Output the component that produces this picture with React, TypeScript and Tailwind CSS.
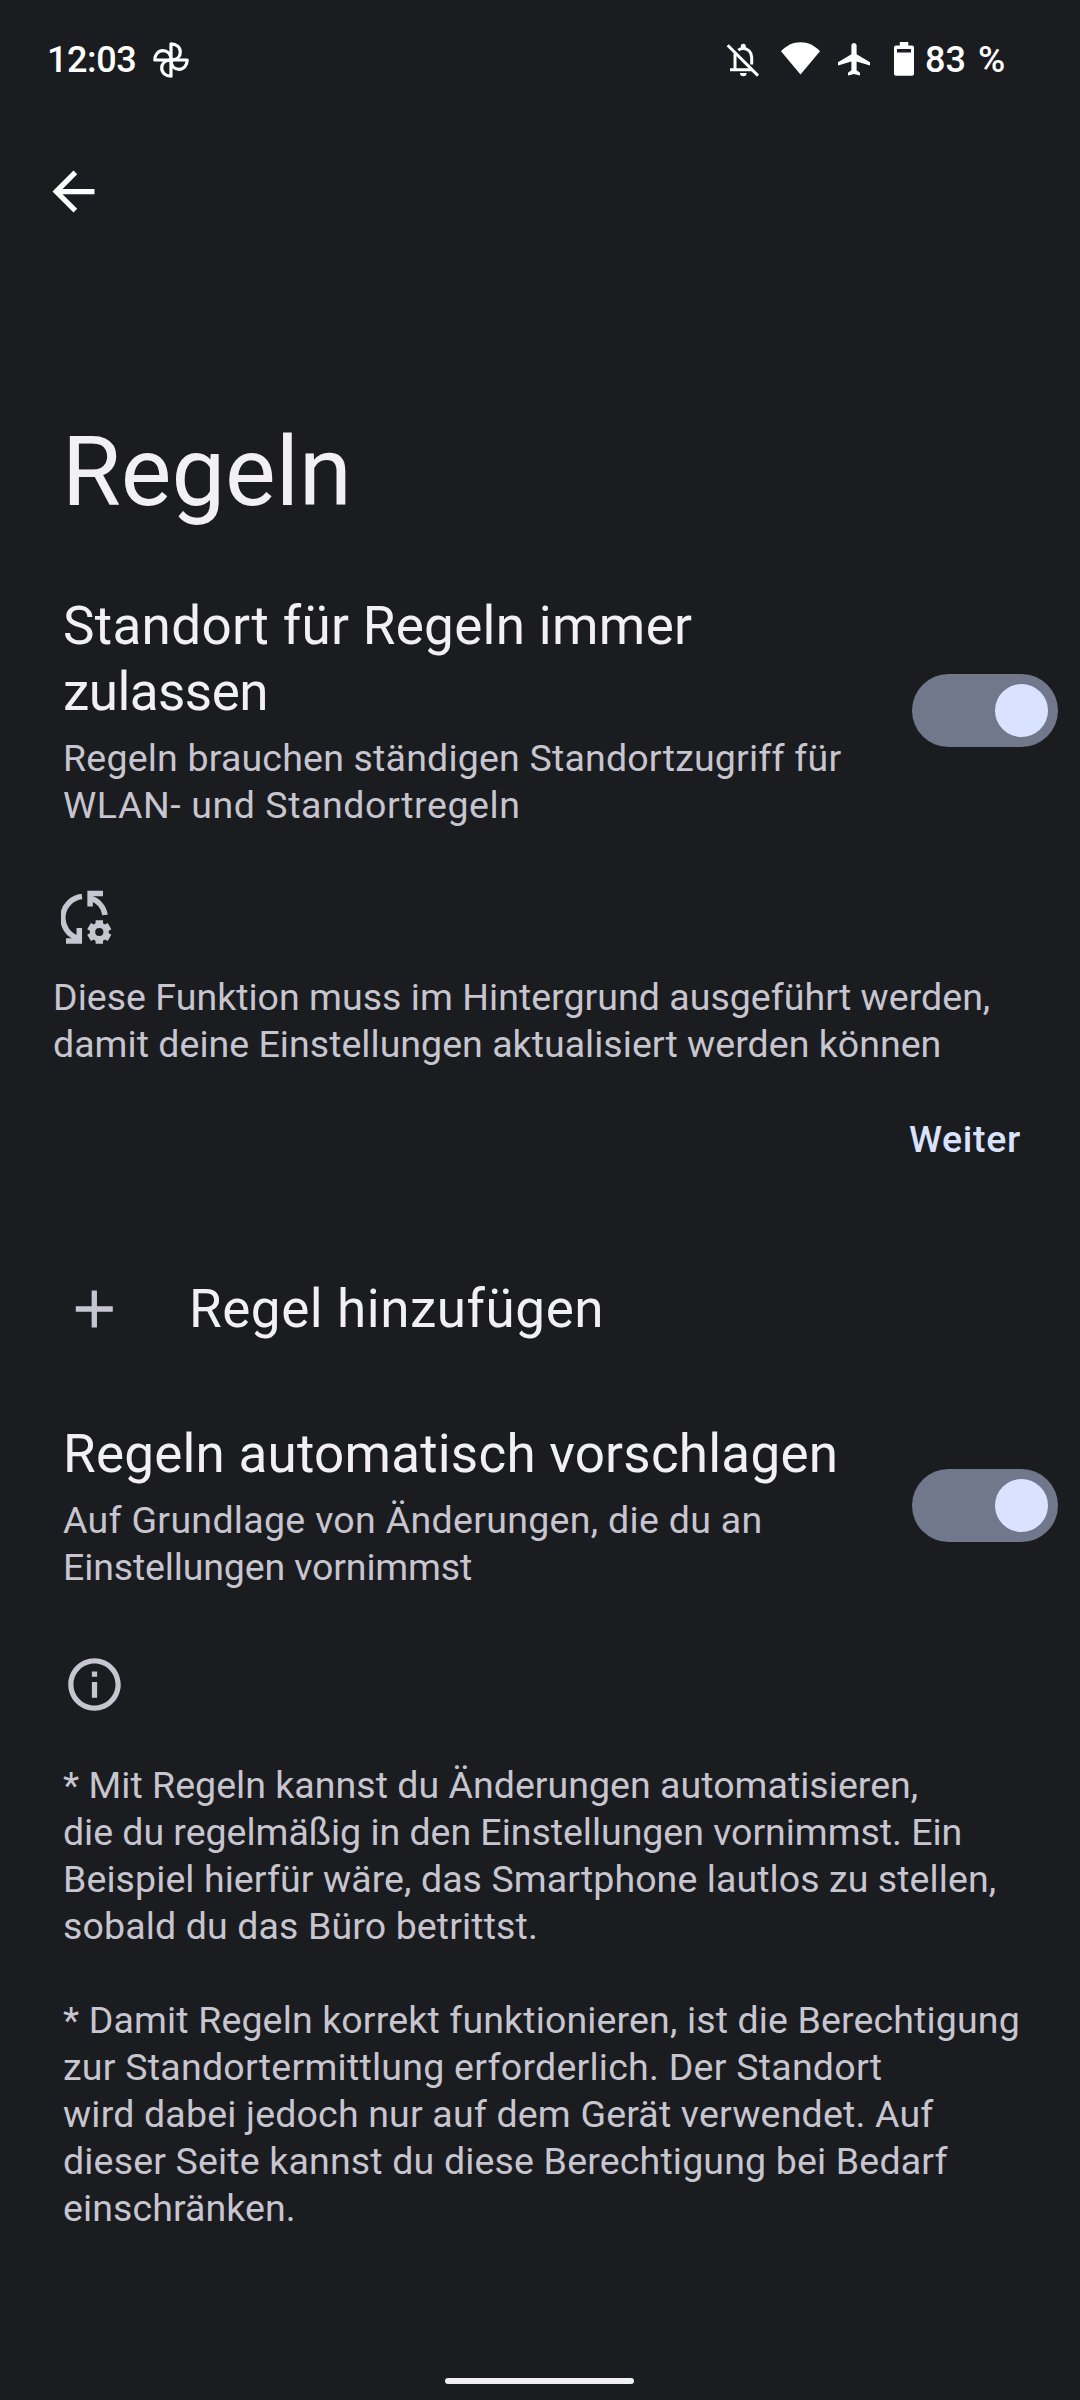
import { MdArrowBack, MdInfoOutline } from "react-icons/md";

type Line = { text: string; tracking: string };

const locationTitle: Line[] = [
  { text: "Standort für Regeln immer", tracking: "tracking-[0.32px]" },
  { text: "zulassen", tracking: "tracking-[-0.55px]" },
];

const locationSummary: Line[] = [
  { text: "Regeln brauchen ständigen Standortzugriff für", tracking: "tracking-[0.2px]" },
  { text: "WLAN- und Standortregeln", tracking: "tracking-[0.58px]" },
];

const backgroundNote: Line[] = [
  { text: "Diese Funktion muss im Hintergrund ausgeführt werden,", tracking: "tracking-[0.03px]" },
  { text: "damit deine Einstellungen aktualisiert werden können", tracking: "tracking-[0.03px]" },
];

const suggestTitle: Line[] = [
  { text: "Regeln automatisch vorschlagen", tracking: "tracking-[0.22px]" },
];

const suggestSummary: Line[] = [
  { text: "Auf Grundlage von Änderungen, die du an", tracking: "tracking-[0.31px]" },
  { text: "Einstellungen vornimmst", tracking: "tracking-[-0.14px]" },
];

const automationInfo: Line[] = [
  { text: "* Mit Regeln kannst du Änderungen automatisieren,", tracking: "tracking-[0.03px]" },
  { text: "die du regelmäßig in den Einstellungen vornimmst. Ein", tracking: "tracking-[-0.03px]" },
  { text: "Beispiel hierfür wäre, das Smartphone lautlos zu stellen,", tracking: "tracking-[0.08px]" },
  { text: "sobald du das Büro betrittst.", tracking: "tracking-[0.13px]" },
];

const permissionInfo: Line[] = [
  { text: "* Damit Regeln korrekt funktionieren, ist die Berechtigung", tracking: "tracking-[0.14px]" },
  { text: "zur Standortermittlung erforderlich. Der Standort", tracking: "tracking-[0.25px]" },
  { text: "wird dabei jedoch nur auf dem Gerät verwendet. Auf", tracking: "tracking-[0.18px]" },
  { text: "dieser Seite kannst du diese Berechtigung bei Bedarf", tracking: "tracking-[0.17px]" },
  { text: "einschränken.", tracking: "tracking-[0.1px]" },
];

function Lines({ lines }: { lines: Line[] }) {
  return lines.map((line) => (
    <span key={line.text} className={`block whitespace-nowrap ${line.tracking}`}>
      {line.text}
    </span>
  ));
}

function Toggle() {
  return (
    <button
      role="switch"
      aria-checked="true"
      className="mb-[2px] flex h-[73px] w-[146px] shrink-0 items-center justify-end rounded-full bg-[#72788b] pr-[10px]"
    >
      <span className="size-[53px] rounded-full bg-[#d9e2ff]" />
    </button>
  );
}

function SwitchRow({ title, summary }: { title: Line[]; summary: Line[] }) {
  return (
    <div className="flex items-center justify-between pr-[22px] pl-[63px]">
      <div>
        <h2 className="text-[53px] leading-[66px] text-[#f2f0f4]">
          <Lines lines={title} />
        </h2>
        <p className="mt-[10px] text-[37.5px] leading-[47px]">
          <Lines lines={summary} />
        </p>
      </div>
      <Toggle />
    </div>
  );
}

function PinwheelIcon() {
  return (
    <svg className="h-9 w-9" viewBox="-18 -18 36 36" fill="none" stroke="currentColor" strokeWidth="3.2" strokeLinejoin="round">
      <path d="M0 0V-16.2C5.5 -16.2 9.3 -12.6 9.3 -8.1C9.3 -4 6.5 0 0 0Z" />
      <path d="M0 0H16.2C16.2 5.5 12.6 9.3 8.1 9.3C4 9.3 0 6.5 0 0Z" />
      <path d="M0 0V16.2C-5.5 16.2 -9.3 12.6 -9.3 8.1C-9.3 4 -6.5 0 0 0Z" />
      <path d="M0 0H-16.2C-16.2 -5.5 -12.6 -9.3 -8.1 -9.3C-4 -9.3 0 -6.5 0 0Z" />
    </svg>
  );
}

function BellOffIcon() {
  return (
    <svg className="h-9 w-[33px]" viewBox="0 0 33 36" fill="none" stroke="currentColor" strokeWidth="3">
      <path d="M1.7 3.3L32 33.6" />
      <path d="M9 11.5V27.7M4 27.8H26" />
      <path d="M12.2 8.2C13.7 7 15.4 6.4 17.3 6.4C22 6.4 25.7 10.3 25.7 15.2V22.5" />
      <path d="M14.8 6.5V4.2A2.5 2.5 0 0 1 19.8 4.2V6.5Z" fill="currentColor" stroke="none" />
      <path d="M14 31H20.6A3.3 3.3 0 0 1 14 31Z" fill="currentColor" stroke="none" />
    </svg>
  );
}

function WifiIcon() {
  return (
    <svg className="h-9 w-[39px]" viewBox="0 0 39 36" fill="currentColor">
      <path d="M19.5 32.5L0 9.3C5.2 3.4 12 0.2 19.5 0.2S33.8 3.4 39 9.3Z" />
    </svg>
  );
}

function PlaneIcon() {
  return (
    <svg className="h-9 w-8" viewBox="0 0 32 36" fill="currentColor">
      <path d="M32 23.6V20.3L18.6 12.2V3.6C18.6 2.2 17.4 1 16 1S13.4 2.2 13.4 3.6V12.2L0 20.3V23.6L13.4 19.6V28.3L10 30.8V33.6L16 32L22 33.6V30.8L18.6 28.3V19.6Z" />
    </svg>
  );
}

function BatteryIcon() {
  return (
    <svg className="h-9 w-5" viewBox="0 0 20 36" fill="currentColor" fillRule="evenodd">
      <path d="M5.8 0H14.3V3.6H18A2 2 0 0 1 20 5.6V31.8A2 2 0 0 1 18 33.8H2A2 2 0 0 1 0 31.8V5.6A2 2 0 0 1 2 3.6H5.8ZM3 7V10.5H17V7Z" />
    </svg>
  );
}

function SyncSettingsIcon() {
  return (
    <svg className="h-[54px] w-[52px]" viewBox="0 0 52 54" fill="none" stroke="currentColor" strokeWidth="5.5">
      <path d="M21 6.6A21.3 21.3 0 0 0 17 48.2" />
      <path d="M5 51.1H18.3V38" />
      <path d="M42 3.5H29.1V16.5" />
      <path d="M30 8.4A20.3 20.3 0 0 1 44 25" />
      <circle cx="38.3" cy="42" r="6.8" strokeWidth="5.4" />
      <g strokeWidth="7.4">
        <path d="M38.3 35.5V30.2M38.3 48.5V53.8" />
        <path d="M38.3 35.5V30.2M38.3 48.5V53.8" transform="rotate(60 38.3 42)" />
        <path d="M38.3 35.5V30.2M38.3 48.5V53.8" transform="rotate(120 38.3 42)" />
      </g>
    </svg>
  );
}

function StatusBar() {
  return (
    <div className="flex h-[120px] items-center pl-[47px] text-[36px] leading-[48px] font-medium text-white">
      <span className="w-[106px] tracking-[-0.4px]">12:03</span>
      <PinwheelIcon />
      <div className="ml-[537px] flex items-center">
        <BellOffIcon />
        <span className="ml-[22px]">
          <WifiIcon />
        </span>
        <span className="ml-[18px]">
          <PlaneIcon />
        </span>
        <span className="ml-6">
          <BatteryIcon />
        </span>
        <span className="ml-[11px] flex gap-3">
          <span>83</span>
          <span className="text-[37px]">%</span>
        </span>
      </div>
    </div>
  );
}

export default function App() {
  return (
    <div className="flex h-[2400px] w-[1080px] flex-col overflow-hidden bg-[#1b1c1f] font-['Roboto',sans-serif] text-[#c6c5d0]">
      <StatusBar />

      <header>
        <button className="mt-[40px] ml-[42px] block text-white">
          <MdArrowBack className="size-[63px]" />
        </button>
        <h1 className="mt-[193px] pl-[62px] text-[95.5px] leading-[112px] text-[#f2f0f4]">
          Regeln
        </h1>
      </header>

      <main className="mt-[65px]">
        <SwitchRow title={locationTitle} summary={locationSummary} />

        {/* Background permission hint */}
        <section className="mt-[61px] text-[37.5px] leading-[47px]">
          <div className="pl-[61px]">
            <SyncSettingsIcon />
          </div>
          <p className="mt-[30px] pl-[53px]">
            <Lines lines={backgroundNote} />
          </p>
          <div className="mt-12 flex justify-end pr-[59px]">
            <button className="font-medium tracking-[0.7px] text-[#d9e2ff]">Weiter</button>
          </div>
        </section>

        {/* Add rule */}
        <div className="mt-[113px] flex items-center pl-[75px]">
          <svg className="size-[38px]" viewBox="0 0 38 38" stroke="currentColor" strokeWidth="5.3">
            <path d="M19.3 0.5V37.5M0.8 19H37.8" />
          </svg>
          <span className="ml-[76px] text-[53px] leading-[66px] tracking-[0.55px] text-[#f2f0f4]">
            Regel hinzufügen
          </span>
        </div>

        <div className="mt-[79px]">
          <SwitchRow title={suggestTitle} summary={suggestSummary} />
        </div>

        {/* Footer info */}
        <section className="mt-[62px] pl-[63px] text-[37.5px] leading-[47px]">
          <MdInfoOutline className="size-[63px]" />
          <p className="mt-[46px]">
            <Lines lines={automationInfo} />
          </p>
          <p className="mt-[47px]">
            <Lines lines={permissionInfo} />
          </p>
        </section>
      </main>

      <div className="mt-auto mr-px mb-4 h-[6px] w-[189px] self-center rounded-full bg-[#f0f0f0]" />
    </div>
  );
}
